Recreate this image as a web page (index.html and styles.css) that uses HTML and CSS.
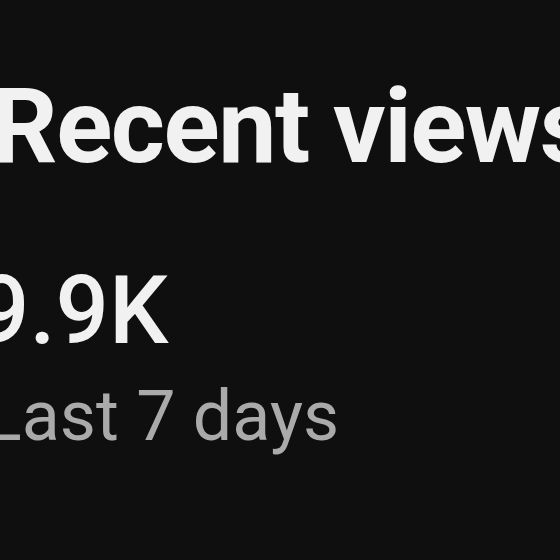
FILE: index.html
```html
<!DOCTYPE html>
<html lang="en">
<head>
    <meta charset="UTF-8">
    <meta name="viewport" content="width=device-width, initial-scale=1.0">
    <title>Recent views</title>
    <link rel="stylesheet" href="styles.css">
</head>
<body>
    <section class="card">
        <h2 class="card-title">Recent views</h2>
        <div class="stat">
            <div class="stat-value">9.9K</div>
            <div class="stat-label">Last 7 days</div>
        </div>
    </section>
</body>
</html>
```

FILE: styles.css
```css
* {
    box-sizing: border-box;
}

html, body {
    margin: 0;
    height: 100%;
    background: #0f0f0f;
    overflow: hidden;
}

body {
    font-family: Roboto, "Noto Sans", Arial, sans-serif;
    color: #f1f1f1;
}

.card {
    width: 700px;
    padding-top: 72px;
}

.card-title {
    margin: 0 0 0 -9px;
    font-size: 104px;
    font-weight: 700;
    line-height: 110px;
    letter-spacing: -1.5px;
    white-space: nowrap;
}

.stat {
    margin-top: 79px;
}

.stat-value {
    margin-left: -24px;
    font-size: 94px;
    font-weight: 500;
    line-height: 100px;
}

.stat-label {
    margin-top: 15px;
    margin-left: -16px;
    font-size: 70px;
    font-weight: 400;
    line-height: 80px;
    color: #aaaaaa;
}
```
